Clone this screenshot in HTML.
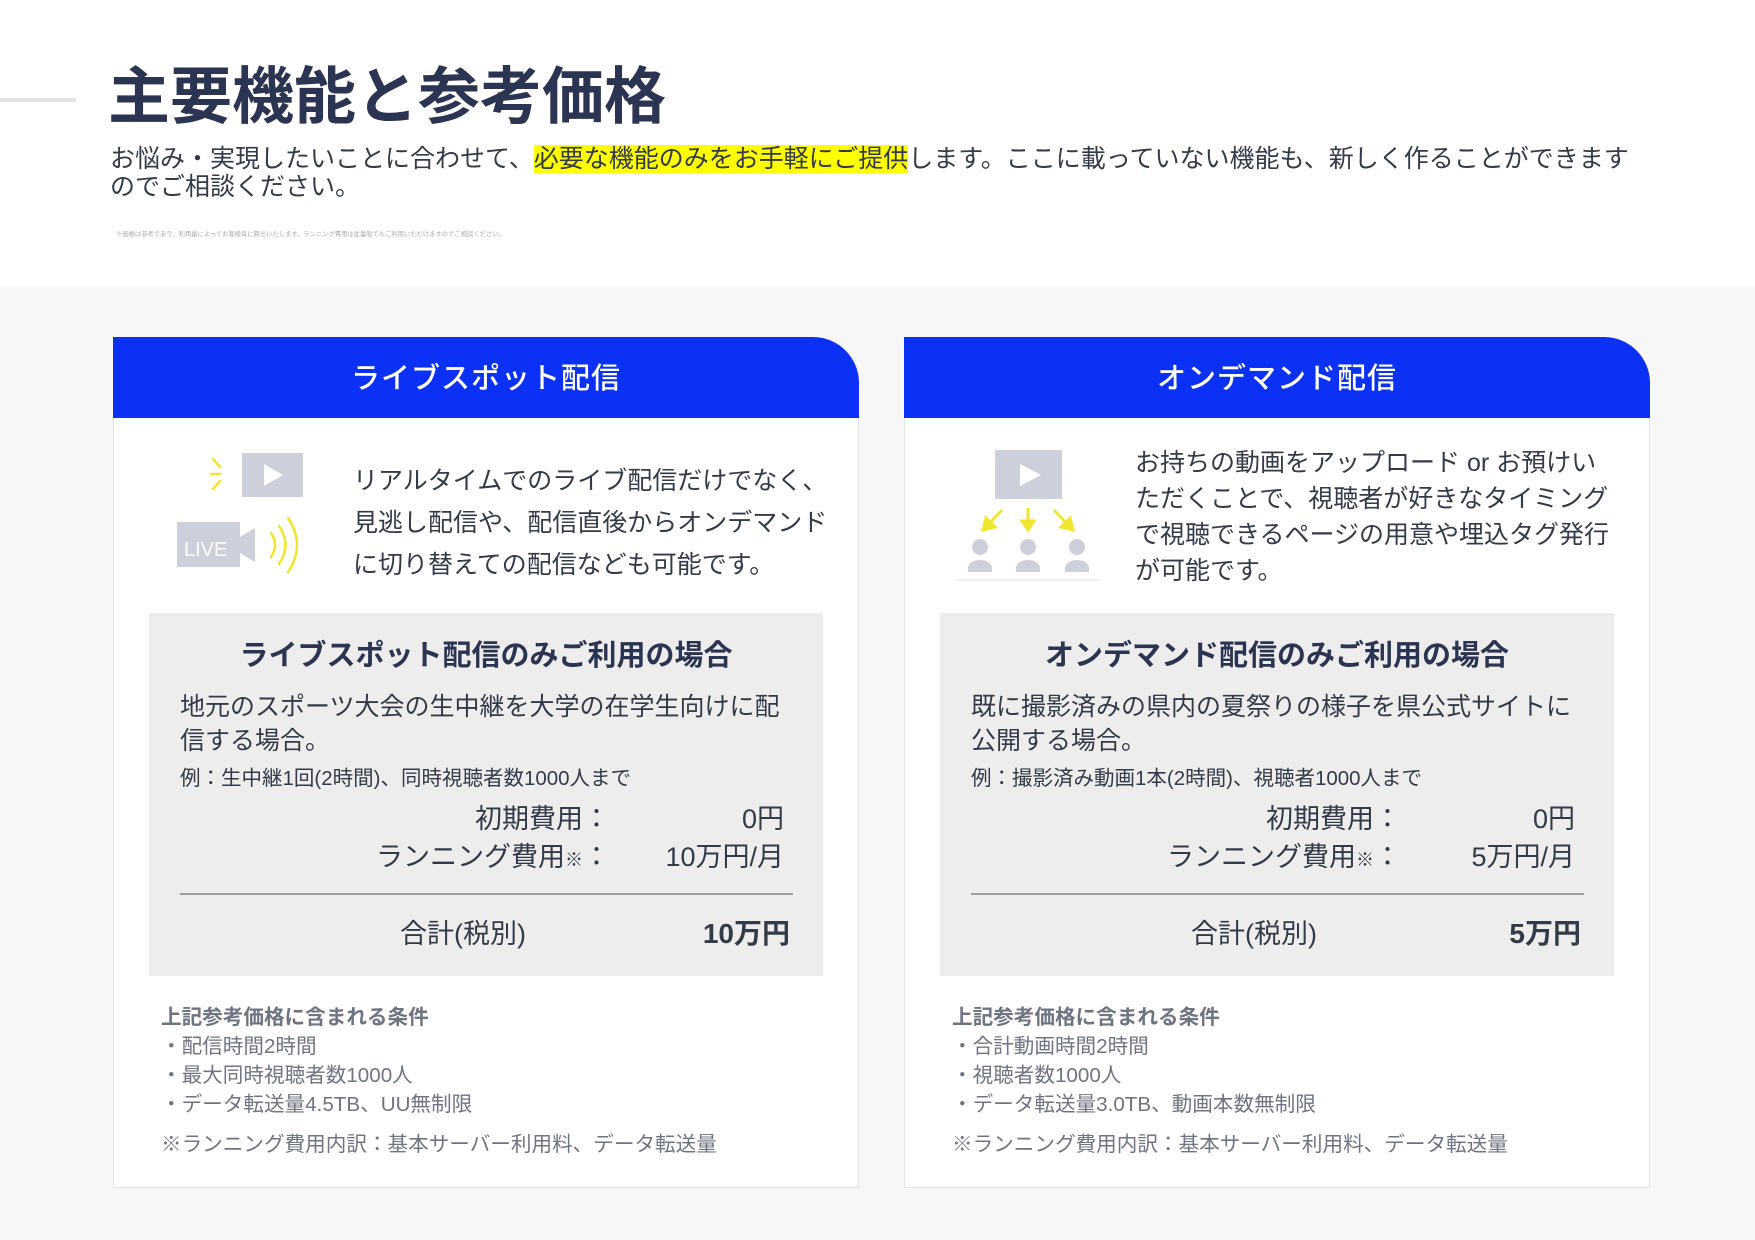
<!DOCTYPE html>
<html><head><meta charset="utf-8">
<style>
*{margin:0;padding:0;box-sizing:border-box}
body{width:1755px;height:1240px;position:relative;background:#fff;font-family:"Liberation Sans","Noto Sans CJK JP",sans-serif;color:#2b3450;overflow:hidden}
.a{position:absolute;white-space:nowrap}
.bg{position:absolute;left:0;top:286px;width:1755px;height:954px;background:#f7f7f7}
.card{position:absolute;top:337px;width:746px;height:851px;background:#fff;border:1px solid #e6e6e6;border-top:none;border-top-right-radius:46px}
.hd{position:absolute;left:-1px;top:0;width:746px;height:81px;background:#0a31f5;border-top-right-radius:46px;color:#fff;font-size:29px;font-weight:500;text-align:center;line-height:84px;letter-spacing:1px}
.box{position:absolute;left:35px;top:276px;width:674px;height:363px;background:#ededed}
.desc{font-size:25px;color:#333a48}
.bt{position:absolute;left:35px;width:674px;text-align:center;top:299px;font-size:29px;font-weight:700;line-height:40px}
.case{left:66px;top:353px;font-size:25px;line-height:34px;color:#333a48}
.ex{left:66px;top:429px;font-size:20.5px;line-height:26px;color:#333a48}
.lbl{font-size:27px;line-height:38px;text-align:right;color:#333a48}
.sep{position:absolute;left:66px;top:556px;width:613px;height:2px;background:#a0a0a0}
.cond{left:47px;top:666px;font-size:20.6px;line-height:29px;color:#6f7482}
.note{left:47px;top:794px;font-size:20.6px;line-height:28px;color:#6f7482}
</style></head><body>
<div class="a" style="left:0;top:98px;width:76px;height:4px;background:#e1e3ea"></div>
<div class="a" style="left:108px;top:62px;font-size:62px;font-weight:700;line-height:72px;color:#2b3450">主要機能と参考価格</div>
<div class="a" style="left:110px;top:145px;font-size:25px;line-height:28px;color:#333a48">お悩み・実現したいことに合わせて、<span style="background:#ffff00">必要な機能のみをお手軽にご提供</span>します。ここに載っていない機能も、新しく作ることができます<br>のでご相談ください。</div>
<div class="a" style="left:116px;top:231px;font-size:6.3px;line-height:8px;color:#aaa">※価格は参考であり、利用量によってお客様毎に算出いたします。ランニング費用は従量制でもご利用いただけますのでご相談ください。</div>
<div class="bg"></div>

<div class="card" style="left:113px">
 <div class="hd">ライブスポット配信</div>
 <div class="a desc" style="left:239px;top:123px;line-height:42px">リアルタイムでのライブ配信だけでなく、<br>見逃し配信や、配信直後からオンデマンド<br>に切り替えての配信なども可能です。</div>
 <div class="box"></div>
 <div class="a bt">ライブスポット配信のみご利用の場合</div>
 <div class="a case">地元のスポーツ大会の生中継を大学の在学生向けに配<br>信する場合。</div>
 <div class="a ex">例：生中継1回(2時間)、同時視聴者数1000人まで</div>
 <div class="a lbl" style="right:248px;top:463px">初期費用：<br>ランニング費用<span style="font-size:18px">※</span>：</div>
 <div class="a lbl" style="right:74px;top:463px">0円<br>10万円/月</div>
 <div class="sep"></div>
 <div class="a lbl" style="left:249px;width:200px;text-align:center;top:578px">合計(税別)</div>
 <div class="a lbl" style="right:68px;top:578px;font-weight:700;font-size:28px">10万円</div>
 <div class="a cond"><b>上記参考価格に含まれる条件</b><br>・配信時間2時間<br>・最大同時視聴者数1000人<br>・データ転送量4.5TB、UU無制限</div>
 <div class="a note">※ランニング費用内訳：基本サーバー利用料、データ転送量</div>
</div>

<div class="card" style="left:904px">
 <div class="hd">オンデマンド配信</div>
 <div class="a desc" style="left:230px;top:108px;line-height:36px">お持ちの動画をアップロード or お預けい<br>ただくことで、視聴者が好きなタイミング<br>で視聴できるページの用意や埋込タグ発行<br>が可能です。</div>
 <div class="box"></div>
 <div class="a bt">オンデマンド配信のみご利用の場合</div>
 <div class="a case">既に撮影済みの県内の夏祭りの様子を県公式サイトに<br>公開する場合。</div>
 <div class="a ex">例：撮影済み動画1本(2時間)、視聴者1000人まで</div>
 <div class="a lbl" style="right:248px;top:463px">初期費用：<br>ランニング費用<span style="font-size:18px">※</span>：</div>
 <div class="a lbl" style="right:74px;top:463px">0円<br>5万円/月</div>
 <div class="sep"></div>
 <div class="a lbl" style="left:249px;width:200px;text-align:center;top:578px">合計(税別)</div>
 <div class="a lbl" style="right:68px;top:578px;font-weight:700;font-size:28px">5万円</div>
 <div class="a cond"><b>上記参考価格に含まれる条件</b><br>・合計動画時間2時間<br>・視聴者数1000人<br>・データ転送量3.0TB、動画本数無制限</div>
 <div class="note a">※ランニング費用内訳：基本サーバー利用料、データ転送量</div>
</div>

<svg class="a" style="left:0;top:0" width="1755" height="1240" viewBox="0 0 1755 1240">
 <rect x="242" y="453" width="61" height="44" fill="#cdd0da"/>
 <polygon points="264,464 264,486 283,475" fill="#fff"/>
 <g stroke="#f0e630" stroke-width="2.5" stroke-linecap="round">
  <line x1="213" y1="459" x2="220" y2="467"/>
  <line x1="211" y1="474" x2="220" y2="474"/>
  <line x1="213" y1="489" x2="220" y2="481"/>
 </g>
 <rect x="177" y="522" width="63" height="45" fill="#cdd0da"/>
 <polygon points="240,537 255,528 255,562 240,553" fill="#cdd0da"/>
 <text x="184" y="556" font-family="Liberation Sans" font-size="20" fill="#fff">LIVE</text>
 <g fill="none" stroke="#f0e630" stroke-width="2.5" stroke-linecap="round">
  <path d="M271 533 Q279 545 271 557"/>
  <path d="M279 526 Q292 545 279 564"/>
  <path d="M288 518 Q306 545 288 572"/>
 </g>
 <rect x="995" y="450" width="67" height="49" fill="#cdd0da"/>
 <polygon points="1020,464 1020,486 1041,475" fill="#fff"/>
 <g stroke="#f0e630" stroke-width="3" fill="#f0e630">
  <line x1="1002" y1="510" x2="989" y2="524"/>
  <polygon points="983,530 986,518 995,527"/>
  <line x1="1028" y1="508" x2="1028" y2="522"/>
  <polygon points="1022,521 1034,521 1028,530"/>
  <line x1="1054" y1="510" x2="1067" y2="524"/>
  <polygon points="1073,530 1061,527 1070,518"/>
 </g>
 <g fill="#cdd0da">
  <circle cx="980" cy="547" r="8"/><path d="M968 572 v-4 a12 8 0 0 1 24 0 v4 z"/>
  <circle cx="1028" cy="547" r="8"/><path d="M1016 572 v-4 a12 8 0 0 1 24 0 v4 z"/>
  <circle cx="1077" cy="547" r="8"/><path d="M1065 572 v-4 a12 8 0 0 1 24 0 v4 z"/>
 </g>
 <line x1="956" y1="580" x2="1100" y2="580" stroke="#e3e3e3" stroke-width="1"/>
</svg>
</body></html>
